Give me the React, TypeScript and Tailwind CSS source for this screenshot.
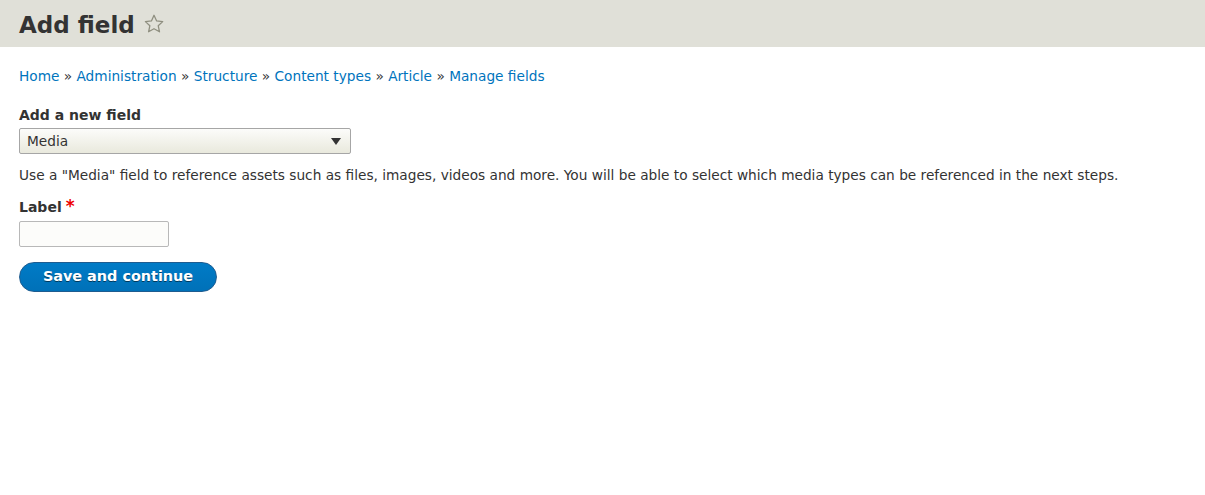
export default function App() {
  return (
    <div className="min-h-screen bg-white text-[#333] font-['DejaVu_Sans',sans-serif] text-[13.7px]">
      {/* Page header */}
      <div className="h-[47px] bg-[#e0e0d8] px-[19px] flex items-center">
        <h1 className="text-[23px] leading-none font-bold text-[#333] flex items-center gap-[8px] pt-[4px]">
          Add field
          <svg width="22" height="22" viewBox="0 0 24 24" className="-mt-[3px]">
            <path
              d="M12 2.5l2.9 6.2 6.6.7-4.9 4.5 1.4 6.6L12 17.2l-5.9 3.3 1.4-6.6-4.9-4.5 6.6-.7z"
              fill="none"
              stroke="#8e8e7f"
              strokeWidth="1.4"
              strokeLinejoin="round"
            />
          </svg>
        </h1>
      </div>

      <div className="px-[19px] pt-[20px]">
        {/* Breadcrumb */}
        <nav className="leading-[19px] text-[#333]">
          <a className="text-[#0074bd]">Home</a> » <a className="text-[#0074bd]">Administration</a> »{" "}
          <a className="text-[#0074bd]">Structure</a> » <a className="text-[#0074bd]">Content types</a> »{" "}
          <a className="text-[#0074bd]">Article</a> » <a className="text-[#0074bd]">Manage fields</a>
        </nav>

        {/* New field select */}
        <div className="mt-[20px]">
          <label className="block font-bold text-[14px] leading-[19px] text-[#333]">Add a new field</label>
          <div className="mt-[3px] w-[332px] h-[26px] border border-[#a6a6a6] rounded-[2px] bg-gradient-to-b from-[#fcfcfa] to-[#e9e9dd] flex items-center justify-between pl-[7px] pr-[9px] text-[#333]">
            <span>Media</span>
            <svg width="10" height="7" viewBox="0 0 10 7">
              <path d="M0 0h10L5 7z" fill="#333" />
            </svg>
          </div>
          <p className="mt-[12px] leading-[19px] text-[#333]">
            Use a "Media" field to reference assets such as files, images, videos and more. You will be able to select which media types can be referenced in the next steps.
          </p>
        </div>

        {/* Label input */}
        <div className="mt-[13px]">
          <label className="flex items-start font-bold text-[14px] leading-[19px] text-[#333]">
            Label
            <span className="text-[#e00] ml-[4px] text-[17px] leading-[17px]">*</span>
          </label>
          <div className="mt-[4px] w-[150px] h-[26px] border border-[#b8b8b8] rounded-[2px] bg-[#fcfcfa]" />
        </div>

        {/* Submit */}
        <button className="mt-[15px] w-[198px] h-[30px] rounded-full border border-[#1e5c90] bg-gradient-to-b from-[#007bc6] to-[#0071b8] text-white font-bold text-[14.4px] [text-shadow:0_1px_rgba(0,0,0,0.5)] flex items-center justify-center">
          Save and continue
        </button>
      </div>
    </div>
  );
}
